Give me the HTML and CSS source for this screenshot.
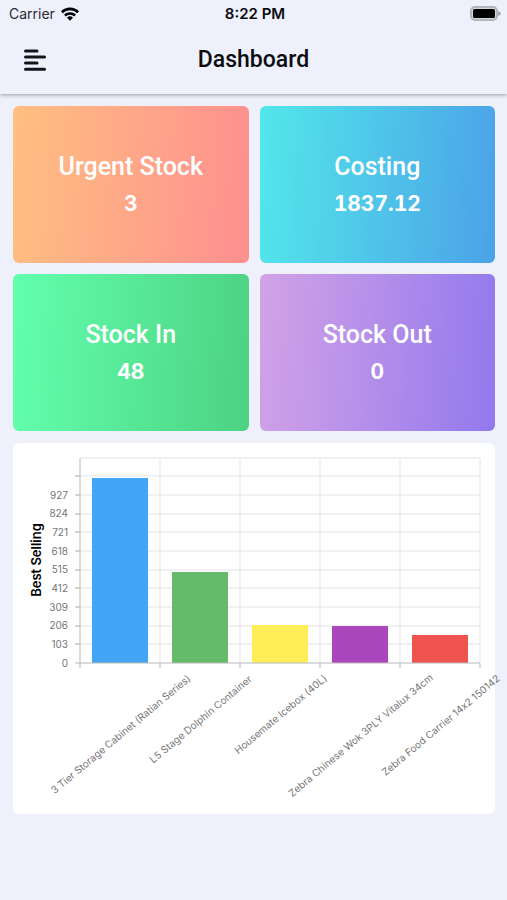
FILE: index.html
```html
<!DOCTYPE html>
<html lang="en">
<head>
<meta charset="utf-8">
<meta name="viewport" content="width=device-width, initial-scale=1">
<title>Dashboard</title>
<link rel="stylesheet" href="styles.css">
</head>
<body>
<header class="header">
  <div class="status">
    <div class="status-left">
      <span>Carrier</span>
      <svg class="wifi" viewBox="0 0 18 14" aria-hidden="true">
        <g fill="none" stroke="#000" stroke-width="2.6">
          <path d="M0.9 5.2a11.6 11.6 0 0 1 16.2 0"/>
          <path d="M3.9 8.5a7.4 7.4 0 0 1 10.2 0"/>
        </g>
        <path d="M6 10.7a4.4 4.4 0 0 1 6 0L9 13.8z"/>
      </svg>
    </div>
    <span class="clock">8:22 PM</span>
    <svg class="battery" viewBox="0 0 31 15" aria-hidden="true">
      <rect x="1" y="1" width="26" height="13" rx="4" fill="#d8d9df" stroke="#b4b5ba" stroke-width="2"/>
      <rect x="3" y="3" width="22" height="9" rx="1.5"/>
      <path d="M28 5q3 1 3 2.500t-3 2.500z" fill="#aaabae"/>
    </svg>
  </div>
  <div class="toolbar">
    <button class="menu" type="button" aria-label="Menu">
      <svg viewBox="0 0 22 22" aria-hidden="true">
        <path d="M1.500 2h11.500M1.500 8h19M1.500 14h11.500M1.500 20.200h19" fill="none" stroke="#151518" stroke-width="3" stroke-linecap="round"/>
      </svg>
    </button>
    <h1 class="title">Dashboard</h1>
  </div>
</header>
<main class="content">
  <section class="cards">
    <article class="card urgent"><h2>Urgent Stock</h2><p>3</p></article>
    <article class="card costing"><h2>Costing</h2><p>1837.12</p></article>
    <article class="card stock-in"><h2>Stock In</h2><p>48</p></article>
    <article class="card stock-out"><h2>Stock Out</h2><p>0</p></article>
  </section>
  <section class="panel">
    <svg class="chart" viewBox="0 0 482 371" role="img" aria-label="Best Selling">
      <path class="grid" d="M67 15H467M62 33H467M62 52H467M62 71H467M62 89H467M62 108H467M62 127H467M62 145H467M62 164H467M62 183H467M62 201H467M147 15V219M227 15V219M307 15V219M387 15V219M467 15V219"/>
      <rect x="79" y="35" width="56" height="185" fill="#42a5f5"/>
      <rect x="159" y="129" width="56" height="91" fill="#66bb6a"/>
      <rect x="239" y="182" width="56" height="38" fill="#ffee58"/>
      <rect x="319" y="183" width="56" height="37" fill="#ab47bc"/>
      <rect x="399" y="192" width="56" height="28" fill="#ef5350"/>
      <path class="axis" d="M67 15V225M62 220H467M147 220V225M227 220V225M307 220V225M387 220V225M467 220V225M62 33H67M62 52H67M62 71H67M62 89H67M62 108H67M62 127H67M62 145H67M62 164H67M62 183H67M62 201H67"/>
      <g class="scale">
        <text x="55" y="56">927</text>
        <text x="55" y="74">824</text>
        <text x="55" y="93">721</text>
        <text x="55" y="112">618</text>
        <text x="55" y="130">515</text>
        <text x="55" y="149">412</text>
        <text x="55" y="168">309</text>
        <text x="55" y="186">206</text>
        <text x="55" y="205">103</text>
        <text x="55" y="224">0</text>
      </g>
      <text class="axis-title" transform="translate(28 117) rotate(-90)">Best Selling</text>
      <g class="names">
        <text transform="translate(110 294) rotate(-40)">3 Tier Storage Cabinet (Ratian Series)</text>
        <text transform="translate(190 279) rotate(-40)">L5 Stage Dolphin Container</text>
        <text transform="translate(270 274) rotate(-40)">Housemate Icebox (40L)</text>
        <text transform="translate(350 295) rotate(-40)">Zebra Chinese Wok 3PLY Vitalux 34cm</text>
        <text transform="translate(430 285) rotate(-40)">Zebra Food Carrier 14x2 150142</text>
      </g>
    </svg>
  </section>
</main>
</body>
</html>
```
FILE: styles.css
```css
* {
  box-sizing: border-box;
}

body {
  margin: 0;
  min-height: 100vh;
  background: #eef0fc;
  color: #0c0c10;
  font-family: Inter, "Liberation Sans", sans-serif;
}

h1, h2, p {
  margin: 0;
}

.header {
  background: #eef0fc;
  box-shadow: 0 1px 4px rgba(0, 0, 0, 0.35);
}

.status {
  display: grid;
  grid-template-columns: 1fr auto 1fr;
  align-items: center;
  height: 26px;
  padding: 1px 6px 0 9px;
  font-size: 14px;
}

.status-left {
  display: flex;
  align-items: center;
  gap: 6px;
  color: #2a2a30;
}

.wifi {
  width: 18px;
  height: 14px;
}

.clock {
  font-size: 15px;
  font-weight: 600;
}

.battery {
  justify-self: end;
  width: 31px;
  height: 15px;
}

.toolbar {
  display: grid;
  grid-template-columns: 1fr auto 1fr;
  align-items: center;
  height: 68px;
  padding: 0 24px;
}

.menu {
  display: flex;
  width: 22px;
  padding: 0;
  border: 0;
  background: none;
}

.menu svg {
  width: 22px;
  height: 22px;
}

.title {
  font: 500 23px/28px Roboto, sans-serif;
}

.content {
  padding: 12px 12px 24px 13px;
}

.cards {
  display: grid;
  grid-template-columns: 1fr 1fr;
  gap: 11px;
}

.card {
  display: flex;
  flex-direction: column;
  align-items: center;
  justify-content: center;
  gap: 4px;
  min-height: 157px;
  border-radius: 6px;
  color: #fff;
}

.card h2 {
  font: 500 25px/34px Roboto, sans-serif;
}

.card p {
  font-size: 21px;
  line-height: 32px;
  font-weight: 700;
  font-variant-numeric: tabular-nums;
}

.urgent {
  background: linear-gradient(94deg, #ffbf80, #fe8f90);
}

.costing {
  background: linear-gradient(94deg, #52e7ea, #4ca2e8);
}

.stock-in {
  background: linear-gradient(94deg, #62ffae, #4cd282);
}

.stock-out {
  background: linear-gradient(94deg, #d2a2e6, #9379ee);
}

.panel {
  margin-top: 12px;
  border-radius: 6px;
  background: #fff;
}

.chart {
  display: block;
  width: 100%;
  overflow: visible;
  font-variant-ligatures: no-contextual;
}

.grid {
  fill: none;
  stroke: #e3e3e3;
}

.axis {
  fill: none;
  stroke: #b8b8b8;
}

.scale,
.names {
  fill: #757575;
  font-size: 10px;
}

.scale {
  text-anchor: end;
}

.names {
  text-anchor: middle;
}

.axis-title {
  font-size: 13px;
  font-weight: 600;
  text-anchor: middle;
}
```
